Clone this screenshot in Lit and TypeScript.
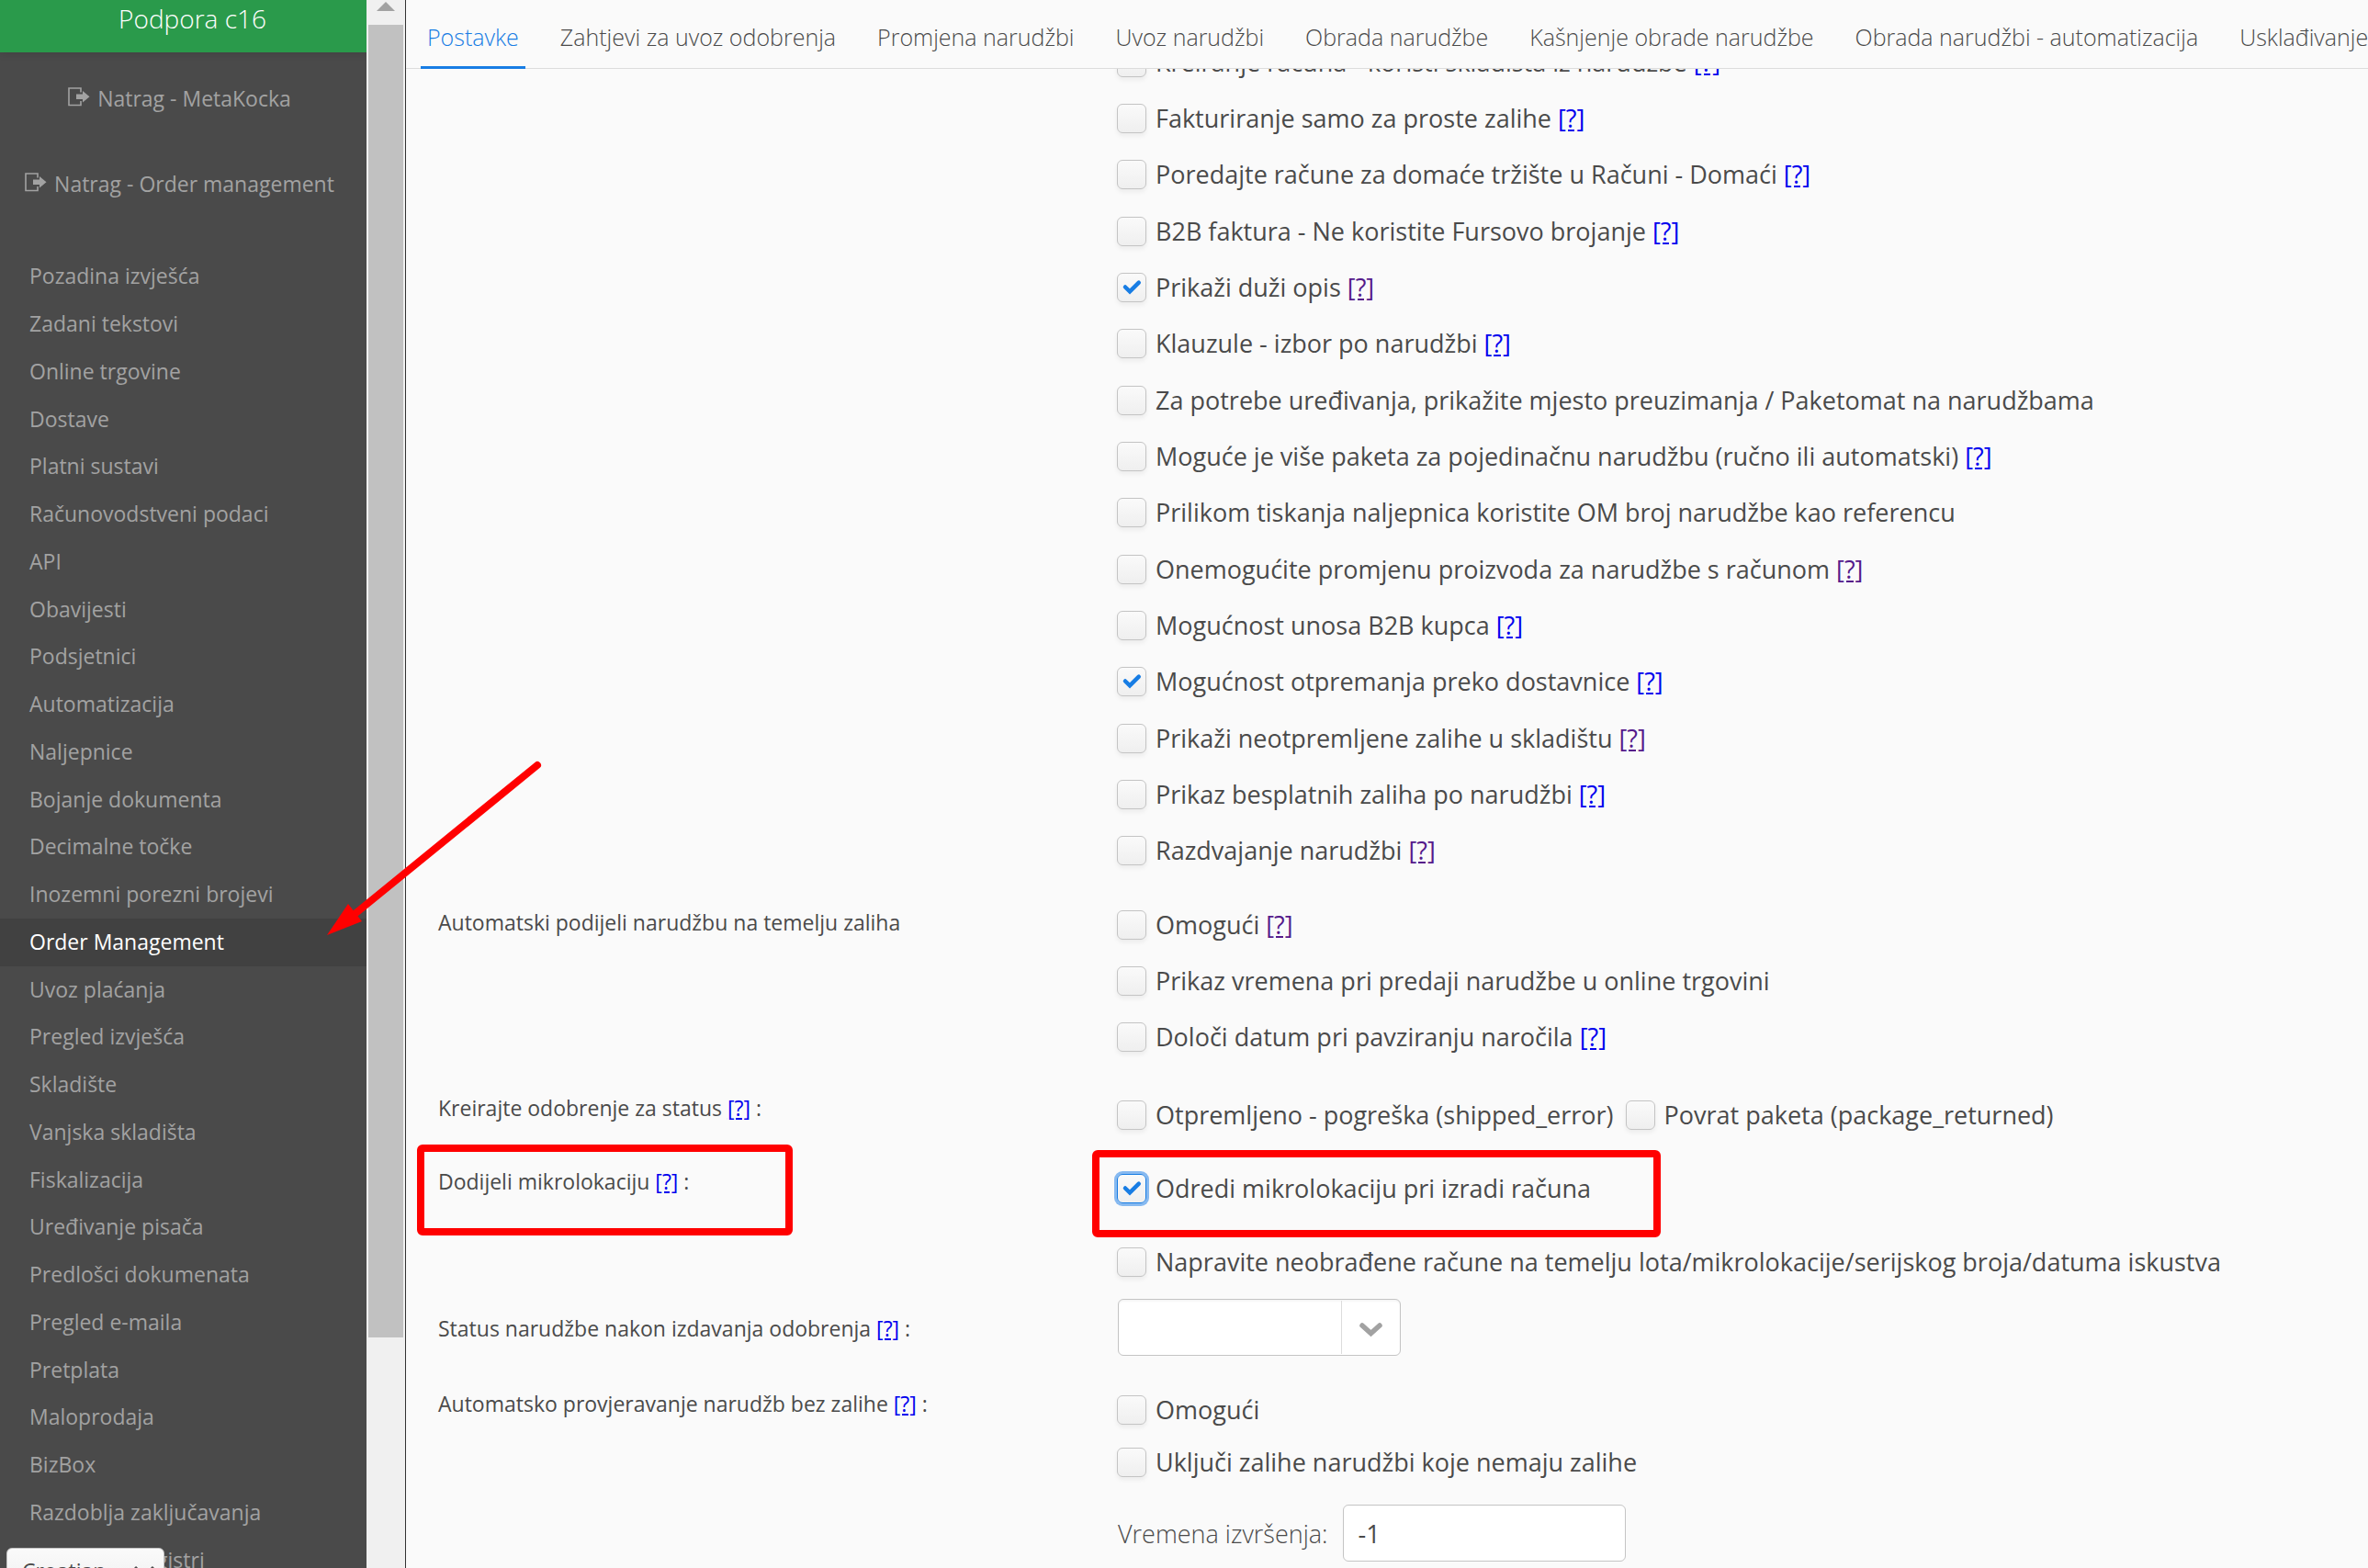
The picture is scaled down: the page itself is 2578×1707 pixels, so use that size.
import { LitElement, html, css, svg, nothing } from "lit";
import { customElement } from "lit/decorators.js";

type Help = "new" | "seen" | undefined;
interface Option {
  text: string;
  help?: Help;
  checked?: boolean;
  focused?: boolean;
}

const TABS = [
  "Postavke",
  "Zahtjevi za uvoz odobrenja",
  "Promjena narudžbi",
  "Uvoz narudžbi",
  "Obrada narudžbe",
  "Kašnjenje obrade narudžbe",
  "Obrada narudžbi - automatizacija",
  "Usklađivanje",
];

const MENU = [
  "Pozadina izvješća", "Zadani tekstovi", "Online trgovine", "Dostave", "Platni sustavi",
  "Računovodstveni podaci", "API", "Obavijesti", "Podsjetnici", "Automatizacija",
  "Naljepnice", "Bojanje dokumenta", "Decimalne točke", "Inozemni porezni brojevi",
  "Order Management", "Uvoz plaćanja", "Pregled izvješća", "Skladište", "Vanjska skladišta",
  "Fiskalizacija", "Uređivanje pisača", "Predlošci dokumenata", "Pregled e-maila",
  "Pretplata", "Maloprodaja", "BizBox", "Razdoblja zaključavanja", "Numerički registri",
];

const GENERAL: Option[] = [
  { text: "Kreiranje računa - koristi skladišta iz narudžbe", help: "new" },
  { text: "Fakturiranje samo za proste zalihe", help: "new" },
  { text: "Poredajte račune za domaće tržište u Računi - Domaći", help: "new" },
  { text: "B2B faktura - Ne koristite Fursovo brojanje", help: "new" },
  { text: "Prikaži duži opis", help: "seen", checked: true },
  { text: "Klauzule - izbor po narudžbi", help: "new" },
  { text: "Za potrebe uređivanja, prikažite mjesto preuzimanja / Paketomat na narudžbama" },
  { text: "Moguće je više paketa za pojedinačnu narudžbu (ručno ili automatski)", help: "new" },
  { text: "Prilikom tiskanja naljepnica koristite OM broj narudžbe kao referencu" },
  { text: "Onemogućite promjenu proizvoda za narudžbe s računom", help: "seen" },
  { text: "Mogućnost unosa B2B kupca", help: "new" },
  { text: "Mogućnost otpremanja preko dostavnice", help: "new", checked: true },
  { text: "Prikaži neotpremljene zalihe u skladištu", help: "seen" },
  { text: "Prikaz besplatnih zaliha po narudžbi", help: "new" },
  { text: "Razdvajanje narudžbi", help: "seen" },
];

const SPLIT: Option[] = [
  { text: "Omogući", help: "seen" },
  { text: "Prikaz vremena pri predaji narudžbe u online trgovini" },
  { text: "Določi datum pri pavziranju naročila", help: "new" },
];

const CREDIT: Option[] = [
  { text: "Otpremljeno - pogreška (shipped_error)" },
  { text: "Povrat paketa (package_returned)" },
];

const LOCATION: Option[] = [
  { text: "Odredi mikrolokaciju pri izradi računa", checked: true, focused: true },
  { text: "Napravite neobrađene račune na temelju lota/mikrolokacije/serijskog broja/datuma iskustva" },
];

const STOCK: Option[] = [
  { text: "Omogući" },
  { text: "Uključi zalihe narudžbi koje nemaju zalihe" },
];

const exitIcon = html`<svg class="exit" viewBox="0 0 24 22" aria-hidden="true">
  <path d="M14 5.500V1H1V19.500H14V15" fill="none" stroke="currentColor" stroke-width="1.600" />
  <path d="M9 7.500H16V4L23.500 10.300L16 16.500V13H9Z" fill="currentColor" />
</svg>`;

@customElement("app-root")
export class AppRoot extends LitElement {
  static styles = css`
    :host {
      display: block;
      font-family: "Open Sans", "Liberation Sans", sans-serif;
      color: #4a4a4a;
    }
    * { box-sizing: border-box; }
    .app {
      position: relative;
      display: flex;
      height: 100vh;
      overflow: hidden;
      background: #fafafa;
    }
    .side {
      flex: none;
      width: 399px;
      background: #4a4a4a;
      color: #a2a2a2;
      overflow: hidden;
    }
    .brand {
      height: 57px;
      padding: 1px 0 0 20px;
      background: #2a9a4b;
      box-shadow: 0 2px 8px rgba(0, 0, 0, 0.1);
      color: #fff;
      font-size: 28px;
      font-weight: 300;
      line-height: 38px;
      text-align: center;
    }
    .back {
      display: flex;
      flex-direction: column;
      gap: 53px;
      padding: 30px 8px 55px 0;
      font-size: 23px;
      line-height: 40px;
    }
    .back a {
      display: flex;
      justify-content: center;
      gap: 8px;
    }
    .side a { color: inherit; text-decoration: none; }
    .exit { width: 24px; height: 22px; margin-top: 8px; }
    .menu { margin: 0; padding: 0; list-style: none; }
    .menu a {
      display: block;
      height: 52px;
      padding-left: 32px;
      font-size: 23px;
      line-height: 51px;
      white-space: nowrap;
    }
    .menu li:nth-child(4n) a { height: 51px; }
    .menu .current { background: #414141; color: #fff; }
    .language {
      position: absolute;
      left: 7px;
      top: calc(100vh - 22px);
      width: 172px;
      height: 50px;
    }
    .language select {
      width: 100%;
      height: 100%;
      padding: 0 16px;
      appearance: none;
      border: 1px solid #c4c4c4;
      border-radius: 6px;
      background: linear-gradient(#fafafa, #efefef);
      color: #4a4a4a;
      font: 23px "Open Sans", sans-serif;
    }
    .language svg { position: absolute; right: 10px; top: 18px; width: 24px; height: 16px; pointer-events: none; }
    .track {
      flex: none;
      display: flex;
      flex-direction: column;
      width: 43px;
      padding: 2px 2px 0 2px;
      border-right: 1px solid #333;
      background: #f0f0f0;
    }
    .track svg { display: block; width: 38px; height: 25px; }
    .thumb { width: 38px; height: 1429px; background: #c1c1c1; }
    .main { flex: 1; min-width: 0; display: flex; flex-direction: column; }
    .tabs {
      flex: none;
      display: flex;
      gap: 31px;
      height: 75px;
      padding-left: 16px;
      overflow: hidden;
      box-shadow: inset 0 -1px #dcdcdc;
      font-size: 25px;
      font-weight: 300;
      line-height: 36px;
      white-space: nowrap;
    }
    .tabs a {
      padding: 22px 7px 0;
      color: #4a4a4a;
      text-decoration: none;
    }
    .tabs .current { border-bottom: 3px solid #187de4; color: #187de4; }
    .view { flex: 1; min-height: 0; overflow: hidden; }
    .form { margin-top: -38px; padding-left: 35px; }
    .section { display: grid; grid-template-columns: 740px 1fr; }
    .caption { padding-top: 16px; font-size: 23px; line-height: 32px; }
    .general { padding-bottom: 15px; }
    .split .fields { padding: 4px 0 14px; }
    .stock { margin-top: 20px; }
    .stock .fields { padding-top: 10px; }
    .row { display: flex; align-items: center; gap: 14px; height: 61px; }
    .row:nth-child(3n) { height: 62px; }
    .tall .row { height: 80px; }
    .stock .row { height: 57px; }
    .option { display: flex; align-items: center; gap: 10px; font-size: 27px; line-height: 38px; white-space: nowrap; }
    .help { color: #0000ee; text-decoration: underline; }
    .help.seen { color: #551a8b; }
    .box { position: relative; display: flex; margin-left: -1px; }
    .box input {
      appearance: none;
      width: 32px;
      height: 32px;
      margin: 0;
      border: 1px solid #c4c4c4;
      border-radius: 6px;
      background: linear-gradient(#fafafa, #efefef);
      box-shadow: 0 3px 5px rgba(0, 0, 0, 0.06);
    }
    .box.focused input { border-color: #187de4; box-shadow: 0 0 0 3px #86b9f0; }
    .box svg { position: absolute; inset: 0; width: 32px; height: 32px; pointer-events: none; }
    .combo { position: relative; width: 308px; height: 62px; }
    .combo select, .time input {
      width: 308px;
      height: 62px;
      border: 1px solid #c4c4c4;
      border-radius: 6px;
      background: #fff;
      color: #4a4a4a;
      font: 27px "Open Sans", sans-serif;
      padding: 0 16px;
      margin: 0;
    }
    .combo select { appearance: none; box-shadow: inset 0 2px 2px rgba(0, 0, 0, 0.04); }
    .combo svg { position: absolute; right: 0; top: 0; width: 66px; height: 62px; pointer-events: none; }
    .time { display: flex; align-items: center; gap: 16px; padding-top: 18px; font-size: 27px; }
    .time label { font-weight: 300; }
    .marks { position: absolute; left: 0; top: 0; width: 100%; height: 100%; pointer-events: none; }
  `;

  private help(kind: Help) {
    return kind ? html` <a class="help ${kind}" href="#help">[?]</a>` : nothing;
  }

  private option(group: string, o: Option, i: number) {
    const id = `${group}-${i}`;
    return html`<div class="option">
      <span class="box ${o.focused ? "focused" : ""}">
        <input type="checkbox" id=${id} .checked=${!!o.checked} />
        ${o.checked
          ? svg`<svg viewBox="0 0 32 32" aria-hidden="true"><path d="M9 15.500L14 20.300L23.800 10.700" fill="none" stroke="#187de4" stroke-width="4.500" stroke-linecap="round" /></svg>`
          : nothing}
      </span>
      <span><label for=${id}>${o.text}</label>${this.help(o.help)}</span>
    </div>`;
  }

  private rows(group: string, list: Option[]) {
    return list.map((o, i) => html`<div class="row">${this.option(group, o, i)}</div>`);
  }

  render() {
    return html`<div class="app">
      <nav class="side">
        <div class="brand">Podpora c16</div>
        <div class="back">
          <a href="#metakocka">${exitIcon}<span>Natrag - MetaKocka</span></a>
          <a href="#orders">${exitIcon}<span>Natrag - Order management</span></a>
        </div>
        <ul class="menu">
          ${MENU.map((m) => html`<li><a href="#menu" class=${m === "Order Management" ? "current" : ""}>${m}</a></li>`)}
        </ul>
      </nav>
      <div class="track">
        <svg viewBox="0 0 38 25" aria-hidden="true"><path d="M9 10L19 0L29 10Z" fill="#a2a2a2" /></svg>
        <div class="thumb"></div>
      </div>
      <main class="main">
        <nav class="tabs">
          ${TABS.map((t, i) => html`<a href="#tab" class=${i === 0 ? "current" : ""}>${t}</a>`)}
        </nav>
        <div class="view">
          <form class="form">
            <section class="section general">
              <div class="caption"></div>
              <div class="fields">${this.rows("general", GENERAL)}</div>
            </section>
            <section class="section split">
              <div class="caption">Automatski podijeli narudžbu na temelju zaliha</div>
              <div class="fields">${this.rows("split", SPLIT)}</div>
            </section>
            <section class="section tall">
              <div class="caption">Kreirajte odobrenje za status${this.help("new")} :</div>
              <div class="fields"><div class="row">${CREDIT.map((o, i) => this.option("credit", o, i))}</div></div>
            </section>
            <section class="section tall">
              <div class="caption">Dodijeli mikrolokaciju${this.help("new")} :</div>
              <div class="fields">${this.rows("location", LOCATION)}</div>
            </section>
            <section class="section">
              <div class="caption"><label for="status">Status narudžbe nakon izdavanja odobrenja</label>${this.help("new")} :</div>
              <div class="fields">
                <div class="combo">
                  <select id="status"><option></option></select>
                  <svg viewBox="0 0 66 62" aria-hidden="true">
                    <path d="M1.500 2V60" stroke="#dcdcdc" />
                    <path d="M24 29L33.500 37.500L43 29" fill="none" stroke="#a2a2a2" stroke-width="5.500" stroke-linecap="round" />
                  </svg>
                </div>
              </div>
            </section>
            <section class="section stock">
              <div class="caption">Automatsko provjeravanje narudžb bez zalihe${this.help("new")} :</div>
              <div class="fields">
                ${this.rows("stock", STOCK)}
                <div class="time"><label for="time">Vremena izvršenja:</label><input id="time" type="text" value="-1" /></div>
              </div>
            </section>
          </form>
        </div>
      </main>
      <div class="language">
        <select aria-label="Jezik"><option>Croatian</option></select>
        <svg viewBox="0 0 24 16" aria-hidden="true"><path d="M2 3L12 13L22 3" fill="none" stroke="#4a4a4a" stroke-width="3" /></svg>
      </div>
      <svg class="marks" aria-hidden="true">
        <rect x="458" y="1250" width="401" height="91" rx="2" fill="none" stroke="#f00" stroke-width="8" />
        <rect x="1193" y="1256" width="611" height="87" rx="2" fill="none" stroke="#f00" stroke-width="8" />
        <path d="M585 833L385 996" stroke="#f00" stroke-width="8" stroke-linecap="round" />
        <path d="M356 1018L379 984L394 1003Z" fill="#f00" />
      </svg>
    </div>`;
  }
}
